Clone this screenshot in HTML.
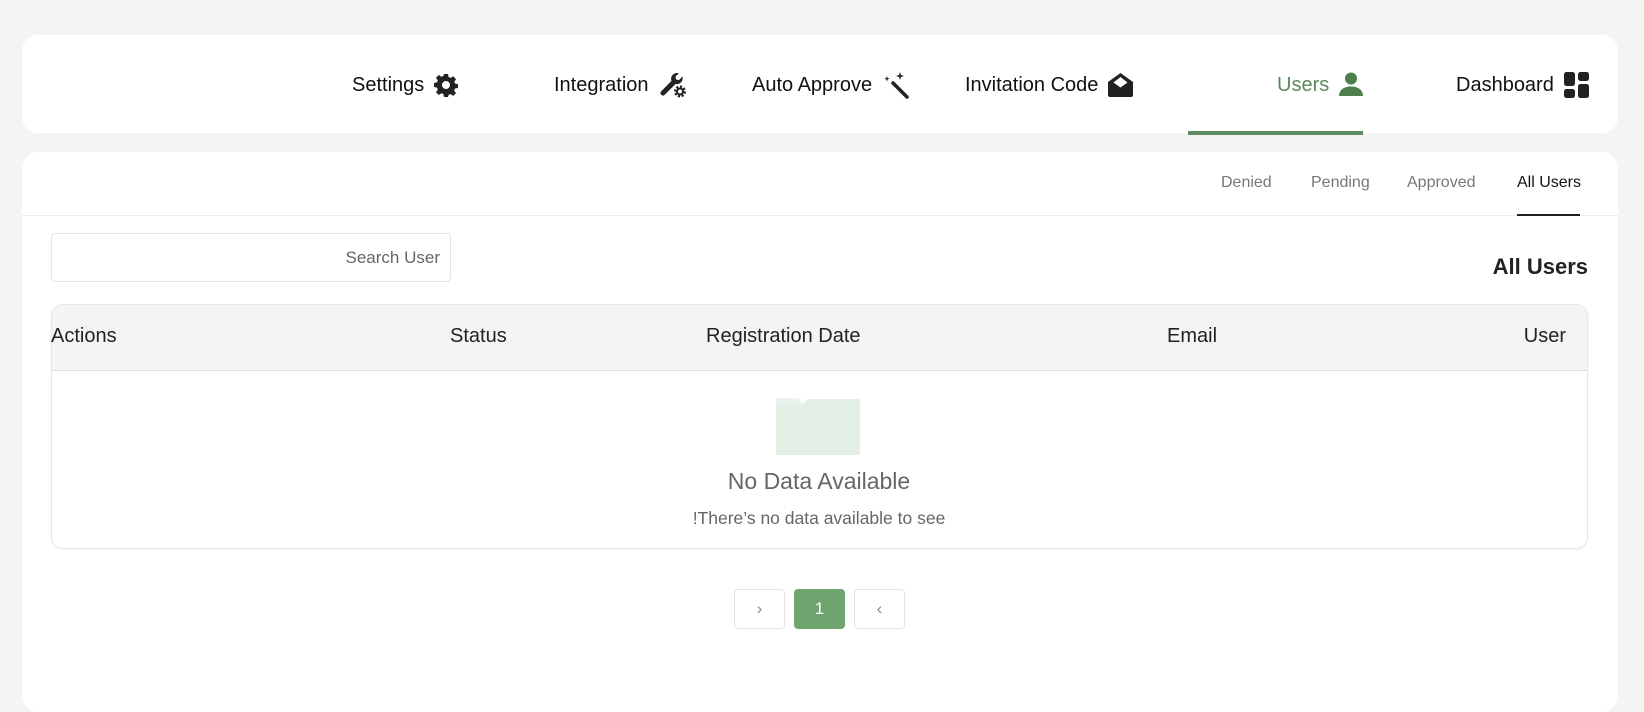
<!DOCTYPE html>
<html><head><meta charset="utf-8"><style>
*{box-sizing:border-box;margin:0;padding:0}
body{width:1644px;height:666px;background:#f4f4f4;font-family:"Liberation Sans",sans-serif;position:relative;overflow:hidden;color:#111}
.abs{position:absolute}
.card1{left:22px;top:35px;width:1596px;height:98px;background:#fff;border-radius:16px}
.nav{font-size:20px;top:72px;height:26px;white-space:nowrap;display:flex;align-items:center;gap:10px}
.card2{left:22px;top:152px;width:1596px;height:560px;background:#fff;border-radius:16px}
.tab{font-size:16px;color:#777;top:174px;line-height:18px}
.th{font-size:20px;top:325px;line-height:23px;color:#222}
.btn{top:589px;width:51px;height:40px;border:1px solid #e3e3e3;border-radius:4px;background:#fff;text-align:center;line-height:38px;color:#888;font-size:17px}
</style></head><body>
<div class="abs card1"></div>
<div class="abs nav" style="left:352px">Settings<svg width="24" height="24" viewBox="0 0 24 24"><path fill="#222" d="M10 1h4l.6 3 2 1 2.6-1.7 2.8 2.8L20.3 8.7l1 2L24 11v4l-3 .5-.8 2 1.8 2.6-2.8 2.8-2.6-1.8-2 .8L14 24h-4l-.6-3-2-.8-2.6 1.8L2 19.2l1.8-2.6-.8-2L0 14v-4l3-.6.8-2L2 4.8 4.8 2 7.4 3.8l2-.8zM12 8a4 4 0 100 8 4 4 0 000-8z"/></svg></div>
<div class="abs nav" style="left:554px">Integration<svg width="28" height="26" viewBox="0 0 28 26"><path fill="#222" d="M18 1a6 6 0 00-5.6 8L2 19.5a2.5 2.5 0 003.5 3.5L13 15.5l1.5-1.5 2-2a6 6 0 007-7.5l-3.5 3.5-3-.5-.5-3L20 1.2A6 6 0 0018 1z"/><circle cx="21" cy="19.5" r="4.5" fill="none" stroke="#222" stroke-width="3" stroke-dasharray="2 1.5"/><circle cx="21" cy="19.5" r="3" fill="none" stroke="#222" stroke-width="2"/></svg></div>
<div class="abs nav" style="left:752px">Auto Approve<svg width="27" height="27" viewBox="0 0 27 27"><path d="M11 11l14 14" stroke="#222" stroke-width="3.5" stroke-linecap="round"/><path fill="#222" d="M18 0l1 3 3 1-3 1-1 3-1-3-3-1 3-1zM5 4l.7 2 2 .7-2 .7L5 9.5l-.7-2-2-.7 2-.7z"/></svg></div>
<div class="abs nav" style="left:965px">Invitation Code<svg width="25" height="24" viewBox="0 0 25 24"><path fill="#222" d="M12.5 0L0 9v13a2 2 0 002 2h21a2 2 0 002-2V9zM12.5 4l7 5.5-7 5-7-5z"/></svg></div>
<div class="abs nav" style="left:1277px;color:#5a8a5a">Users<svg width="24" height="26" viewBox="0 0 24 26"><circle cx="12" cy="6.5" r="6" fill="#4d7f4d"/><path fill="#4d7f4d" d="M0 24c0-6 5-9.5 12-9.5S24 18 24 24z"/></svg></div>
<div class="abs nav" style="left:1456px">Dashboard<svg width="25" height="26" viewBox="0 0 25 26"><rect x="0" y="0" width="11" height="14" rx="2.5" fill="#222"/><rect x="0" y="17" width="11" height="9" rx="2.5" fill="#222"/><rect x="14" y="0" width="11" height="9" rx="2.5" fill="#222"/><rect x="14" y="12" width="11" height="14" rx="2.5" fill="#222"/></svg></div>
<div class="abs" style="left:1188px;top:131px;width:175px;height:4px;background:#5f8c5f"></div>

<div class="abs card2"></div>
<div class="abs" style="left:22px;top:215px;width:1596px;height:1px;background:#ececec"></div>
<div class="abs tab" style="left:1221px">Denied</div>
<div class="abs tab" style="left:1311px">Pending</div>
<div class="abs tab" style="left:1407px">Approved</div>
<div class="abs tab" style="left:1517px;color:#111">All Users</div>
<div class="abs" style="left:1517px;top:214px;width:63px;height:2px;background:#222"></div>

<div class="abs" style="left:51px;top:233px;width:400px;height:49px;border:1px solid #e5e5e5;border-radius:4px"></div>
<div class="abs" style="left:51px;top:248px;width:389px;text-align:right;font-size:17px;color:#666">Search User</div>
<div class="abs" style="left:1400px;top:254px;width:188px;text-align:right;font-size:22px;font-weight:bold;color:#222">All Users</div>

<div class="abs" style="left:51px;top:304px;width:1537px;height:245px;border:1px solid #e6e6e6;border-radius:12px;overflow:hidden;box-shadow:0 1px 2px rgba(0,0,0,.05)">
<div style="height:66px;background:#f2f4f5;border-bottom:1px solid #e0e0e0"></div></div>
<div class="abs th" style="left:51px">Actions</div>
<div class="abs th" style="left:450px">Status</div>
<div class="abs th" style="left:706px">Registration Date</div>
<div class="abs th" style="left:1167px">Email</div>
<div class="abs th" style="left:1400px;width:166px;text-align:right">User</div>

<svg class="abs" style="left:776px;top:395px" width="84" height="62" viewBox="0 0 84 62"><path fill="#eaf4ec" d="M0 3h22l6 7h-3L0 10z"/><path fill="#e4f0e6" d="M0 10h26l5-6h53v56H0z"/></svg>
<div class="abs" style="left:619px;top:468px;width:400px;text-align:center;font-size:23px;color:#666">No Data Available</div>
<div class="abs" style="left:569px;top:508px;width:500px;text-align:center;font-size:17.5px;color:#666">!There’s no data available to see</div>

<div class="abs btn" style="left:734px">›</div>
<div class="abs btn" style="left:794px;background:#6fa46f;border-color:#6fa46f;color:#fff">1</div>
<div class="abs btn" style="left:854px">‹</div>
</body></html>
